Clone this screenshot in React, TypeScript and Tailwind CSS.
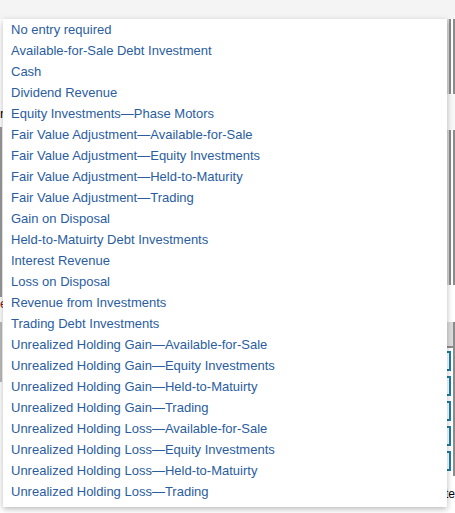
import React from "react";

const options = [
  "No entry required",
  "Available-for-Sale Debt Investment",
  "Cash",
  "Dividend Revenue",
  "Equity Investments\u2014Phase Motors",
  "Fair Value Adjustment\u2014Available-for-Sale",
  "Fair Value Adjustment\u2014Equity Investments",
  "Fair Value Adjustment\u2014Held-to-Maturity",
  "Fair Value Adjustment\u2014Trading",
  "Gain on Disposal",
  "Held-to-Matuirty Debt Investments",
  "Interest Revenue",
  "Loss on Disposal",
  "Revenue from Investments",
  "Trading Debt Investments",
  "Unrealized Holding Gain\u2014Available-for-Sale",
  "Unrealized Holding Gain\u2014Equity Investments",
  "Unrealized Holding Gain\u2014Held-to-Matuirty",
  "Unrealized Holding Gain\u2014Trading",
  "Unrealized Holding Loss\u2014Available-for-Sale",
  "Unrealized Holding Loss\u2014Equity Investments",
  "Unrealized Holding Loss\u2014Held-to-Matuirty",
  "Unrealized Holding Loss\u2014Trading",
];

export default function App() {
  return (
    <div className="relative w-[455px] h-[513px] overflow-hidden bg-white font-['Liberation_Sans',Arial,sans-serif]">
      {/* page underneath the open menu */}
      <div className="flex flex-col h-full">
        <div className="h-[19px] bg-[#f4f4f4]" />
        <div className="flex-1 flex justify-between">
          <div className="flex flex-col w-[3px] pt-[88px]">
            <div className="h-[11px] text-[13px] leading-none text-black">n</div>
            <div className="mt-[9px] h-[170px] border-l-2 border-[#9a9a9a]" />
            <div className="text-[13px] text-[#8a1a1a] leading-none">e</div>
            <div className="mt-[12px] h-[60px] border-l-2 border-[#bbbbbb]" />
          </div>
          <div className="flex flex-col w-[8px]">
            <div className="h-[75px] flex border-l-2 border-[#d8d8d8]">
              <div className="w-[2px] bg-[#8c8c8c]" />
              <div className="w-[2px]" />
              <div className="w-[2px] bg-[#8c8c8c]" />
            </div>
            <div className="h-[36px] bg-[#f7f7f7]" />
            <div className="h-[155px] flex border-l-2 border-[#d8d8d8]">
              <div className="w-[2px] bg-[#8c8c8c]" />
              <div className="w-[2px]" />
              <div className="w-[2px] bg-[#8c8c8c]" />
            </div>
            <div className="h-[37px] bg-white" />
            <div className="h-[24px] bg-[#dcdcdc] border-r-2 border-[#8c8c8c]" />
            <div className="h-[2px] bg-[#8c8c8c]" />
            <div className="flex flex-col gap-[5px] pt-[3px] pr-[2px] border-r-2 border-[#8c8c8c] h-[128px]">
              {[0, 1, 2, 3, 4].map((i) => (
                <div key={i} className="h-[20px] w-[4px] border-2 border-l-0 border-[#1a7fa8]" />
              ))}
            </div>
            <div className="mt-[12px] text-[12px] leading-none text-black -ml-[2px]">te</div>
          </div>
        </div>
      </div>

      {/* open dropdown */}
      <ul className="absolute left-[3px] top-[19px] w-[444px] bg-white pb-[5px] shadow-[0_2px_6px_rgba(0,0,0,0.28)]">
        {options.map((o) => (
          <li
            key={o}
            className="h-[21px] pl-[8px] flex items-center text-[13px] text-[#2a5d9f] whitespace-nowrap"
          >
            {o}
          </li>
        ))}
      </ul>
    </div>
  );
}
